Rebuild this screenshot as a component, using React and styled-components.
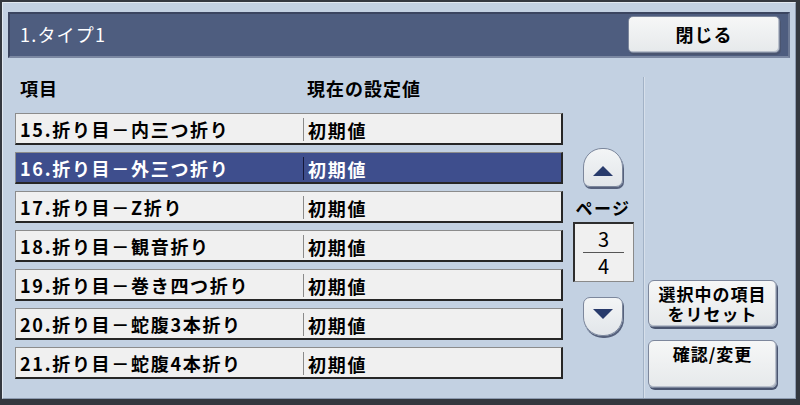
import React from 'react';
import styled, { createGlobalStyle } from 'styled-components';

const items = [
	{ label: '15.折り目－内三つ折り', value: '初期値' },
	{ label: '16.折り目－外三つ折り', value: '初期値', selected: true },
	{ label: '17.折り目－Z折り', value: '初期値' },
	{ label: '18.折り目－観音折り', value: '初期値' },
	{ label: '19.折り目－巻き四つ折り', value: '初期値' },
	{ label: '20.折り目－蛇腹3本折り', value: '初期値' },
	{ label: '21.折り目－蛇腹4本折り', value: '初期値' },
];

const App = () => {
	return (
		<>
			<GlobalStyle />
			<Screen>
				<Panel>
					<TitleBar>
						<Title>1.タイプ1</Title>
						<CloseButton>閉じる</CloseButton>
					</TitleBar>

					<Content>
						<ListColumn>
							<Header>
								<HeadCell $w={292}>項目</HeadCell>
								<HeadCell>現在の設定値</HeadCell>
							</Header>
							<Rows>
								{items.map((item) => (
									<Row key={item.label} $selected={item.selected}>
										<Label>{item.label}</Label>
										<Value $selected={item.selected}>{item.value}</Value>
									</Row>
								))}
							</Rows>
						</ListColumn>

						<PagerColumn>
							<ArrowButton $dir='up'>
								<Triangle $dir='up' />
							</ArrowButton>
							<PageLabel>ページ</PageLabel>
							<PageBox>
								<span>3</span>
								<PageRule />
								<span>4</span>
							</PageBox>
							<ArrowButton $dir='down'>
								<Triangle $dir='down' />
							</ArrowButton>
						</PagerColumn>

						<ActionColumn>
							<ActionButton $h={47}>
								<ButtonLine>選択中の項目</ButtonLine>
								<ButtonLine>をリセット</ButtonLine>
							</ActionButton>
							<ActionButton $h={48} $top>
								<ButtonLine>確認/変更</ButtonLine>
							</ActionButton>
						</ActionColumn>
					</Content>
				</Panel>
			</Screen>
		</>
	);
};

export default App;

const GlobalStyle = createGlobalStyle`
	html, body {
		margin: 0;
		padding: 0;
		background: #34383f;
	}
	body {
		font-family: "Noto Sans CJK JP", "Noto Sans", sans-serif;
	}
`;

const Screen = styled.div`
	width: 800px;
	height: 405px;
	box-sizing: border-box;
	padding: 2px 4px 6px 2px;
	background: #34383f;
	display: flex;
`;

const Panel = styled.div`
	flex: 1;
	display: flex;
	flex-direction: column;
	background: #c3d1e2;
	border: 1px solid #e2e9f1;
	border-right-color: #8d9bb0;
	border-bottom-color: #8d9bb0;
`;

const TitleBar = styled.div`
	margin: 9px 5px 0 5px;
	height: 46px;
	box-sizing: border-box;
	display: flex;
	align-items: center;
	justify-content: space-between;
	padding: 0 8px 2px 10px;
	background: #4e5d7f;
	border: 2px solid #3b4560;
	border-right-color: #6c7994;
	border-bottom-color: #7b88a2;
`;

const Title = styled.div`
	color: #ffffff;
	font-size: 18px;
	letter-spacing: 1.2px;
`;

const buttonFace = `
	box-sizing: border-box;
	background: linear-gradient(#f6f7f7, #e6e9eb);
	border: 1px solid #7d879c;
	box-shadow: 1px 2px 0 #4a5570, inset -1px -1px 0 #b9c0cc;
	color: #000;
	font-weight: bold;
	font-size: 18px;
	text-align: center;
`;

const CloseButton = styled.div`
	${buttonFace}
	width: 152px;
	height: 37px;
	border-radius: 5px;
	line-height: 34px;
	letter-spacing: 1px;
`;

const Content = styled.div`
	flex: 1;
	display: flex;
`;

const ListColumn = styled.div`
	width: 548px;
	margin-left: 12px;
	padding-top: 19px;
`;

const Header = styled.div`
	display: flex;
	height: 22px;
	margin-bottom: 14px;
	align-items: center;
`;

const HeadCell = styled.div`
	box-sizing: border-box;
	width: ${(p) => (p.$w ? `${p.$w}px` : 'auto')};
	padding-left: ${(p) => (p.$w ? '5px' : '0')};
	font-size: 18px;
	font-weight: bold;
	letter-spacing: 1px;
`;

const Rows = styled.div`
	display: flex;
	flex-direction: column;
	gap: 7px;
`;

const Row = styled.div`
	height: 32px;
	box-sizing: border-box;
	display: flex;
	align-items: center;
	background: ${(p) => (p.$selected ? '#3e4e8d' : '#f0f0f0')};
	color: ${(p) => (p.$selected ? '#ffffff' : '#000000')};
	border-top: 1px solid #8c8c8c;
	border-left: 1px solid #8c8c8c;
	border-right: 2px solid #262626;
	border-bottom: 2px solid #262626;
	font-size: 18px;
	font-weight: bold;
	letter-spacing: 1.7px;
`;

const Label = styled.div`
	width: 283px;
	padding-left: 4px;
	white-space: nowrap;
`;

const Value = styled.div`
	align-self: stretch;
	display: flex;
	align-items: center;
	margin: 4px 0 2px;
	padding-left: 4px;
	border-left: 1px solid ${(p) => (p.$selected ? '#15183a' : '#8a8a8a')};
`;

const PagerColumn = styled.div`
	width: 80px;
	display: flex;
	flex-direction: column;
	align-items: center;
	padding-top: 90px;
`;

const ArrowButton = styled.div`
	width: 40px;
	height: 39px;
	box-sizing: border-box;
	display: flex;
	align-items: center;
	justify-content: center;
	background: linear-gradient(#f3f5f6, #e2e6ea);
	border: 1px solid #7c879c;
	box-shadow: 1px 2px 0 #56617c;
	border-radius: ${(p) => (p.$dir === 'up' ? '19px 19px 7px 7px' : '7px 7px 19px 19px')};
	padding-top: ${(p) => (p.$dir === 'up' ? '6px' : '0')};
	padding-bottom: ${(p) => (p.$dir === 'down' ? '6px' : '0')};
	margin-top: ${(p) => (p.$dir === 'down' ? '15px' : '0')};
`;

const Triangle = styled.div`
	width: 0;
	height: 0;
	border-left: 10px solid transparent;
	border-right: 10px solid transparent;
	${(p) =>
		p.$dir === 'up'
			? 'border-bottom: 10px solid #283b6c;'
			: 'border-top: 10px solid #283b6c;'}
`;

const PageLabel = styled.div`
	margin-top: 10px;
	height: 21px;
	line-height: 21px;
	font-size: 17px;
	font-weight: bold;
	letter-spacing: 1.5px;
`;

const PageBox = styled.div`
	margin-top: 4px;
	width: 61px;
	height: 60px;
	box-sizing: border-box;
	display: flex;
	flex-direction: column;
	align-items: center;
	justify-content: center;
	background: #f0f0f0;
	border-top: 2px solid #2e2e2e;
	border-left: 2px solid #2e2e2e;
	border-right: 1px solid #8a8a8a;
	border-bottom: 1px solid #8a8a8a;
	font-size: 20px;
	line-height: 24px;

	span {
		height: 24px;
	}
`;

const PageRule = styled.div`
	width: 41px;
	height: 1px;
	background: #555;
	margin: 1px 0 1px;
`;

const ActionColumn = styled.div`
	flex: 1;
	display: flex;
	flex-direction: column;
	justify-content: flex-end;
	padding: 0 0 10px 4px;
	margin-top: 19px;
	border-left: 1px solid #a2b2c6;
	box-shadow: inset 1px 0 0 #d6dfea;
`;

const ActionButton = styled.div`
	${buttonFace}
	width: 129px;
	height: ${(p) => p.$h}px;
	margin-top: ${(p) => (p.$top ? '13px' : '0')};
	border-radius: 6px;
	padding-top: 3px;
	letter-spacing: 1px;
	display: flex;
	flex-direction: column;
	align-items: center;
`;

const ButtonLine = styled.div`
	height: 20px;
	line-height: 20px;
	font-size: 17px;
`;
